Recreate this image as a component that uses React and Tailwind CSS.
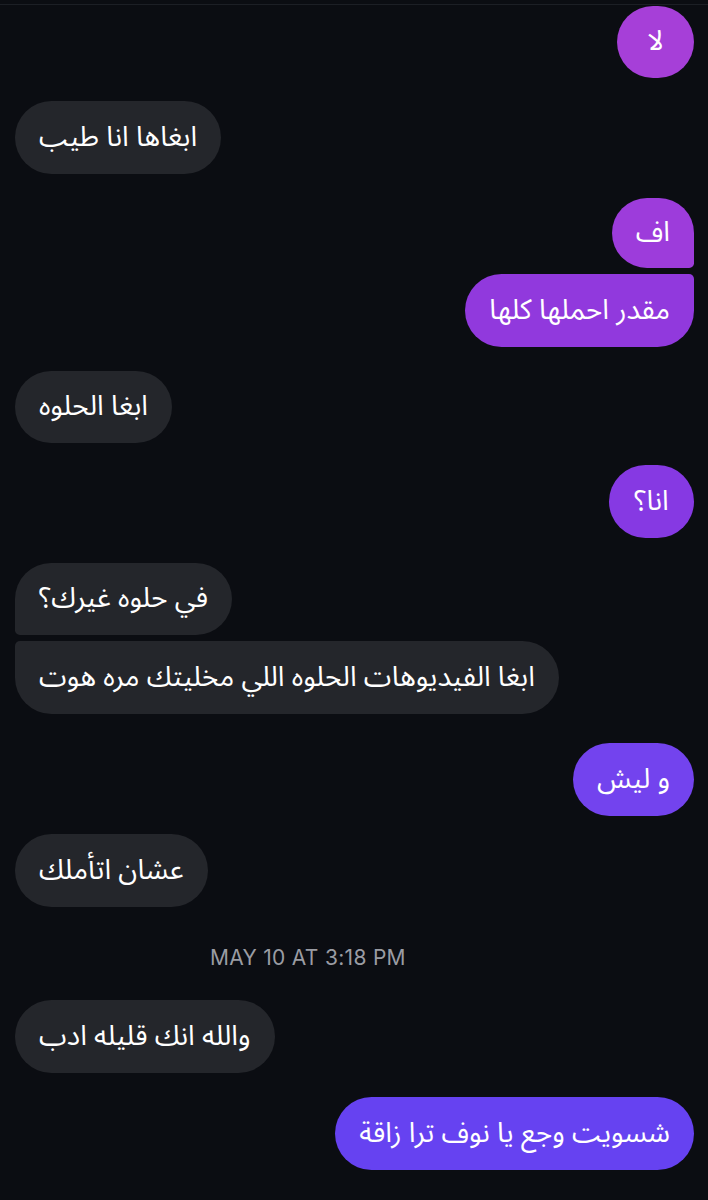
// Chat thread screenshot: Arabic messages, sent (purple gradient) on the right, received (gray) on the left
const font = { fontFamily: '"Noto Sans Arabic", "Noto Sans", "DejaVu Sans", sans-serif' };

function Bubble({ text, mine, color = "bg-[#24262b]", corner = "", h = "h-[73px]", pad = "px-[24px]", mt = "" }) {
  return (
    <div
      dir="rtl"
      style={font}
      className={`flex items-center justify-center rounded-[37px] text-[28px] leading-none text-white whitespace-nowrap ${
        mine ? "self-end" : "self-start"
      } ${color} ${corner} ${h} ${pad} ${mt}`}
    >
      {text}
    </div>
  );
}

export default function App() {
  return (
    <div className="w-[708px] h-[1200px] bg-[#0b0d12] overflow-hidden">
      <div className="h-[4px]" />
      <div className="h-px bg-[#1c1f25]" />
      <div className="flex flex-col pl-[15px] pr-[14px] pt-px">
        <Bubble mine text="لا" color="bg-[#a63fd8]" h="h-[72px]" pad="w-[77px]" />
        <Bubble text="ابغاها انا طيب" mt="mt-[23px]" />
        <Bubble mine text="اف" color="bg-[#9d3cdb]" corner="rounded-br-[5px]" h="h-[70px]" mt="mt-[24px]" />
        <Bubble mine text="مقدر احملها كلها" color="bg-[#9139dd]" corner="rounded-tr-[5px]" mt="mt-[6px]" />
        <Bubble text="ابغا الحلوه" h="h-[72px]" mt="mt-[24px]" />
        <Bubble mine text="انا؟" color="bg-[#8639e3]" pad="w-[85px]" mt="mt-[22px]" />
        <Bubble text="في حلوه غيرك؟" corner="rounded-bl-[5px]" h="h-[72px]" mt="mt-[25px]" />
        <Bubble text="ابغا الفيديوهات الحلوه اللي مخليتك مره هوت" corner="rounded-tl-[5px]" mt="mt-[6px]" />
        <Bubble mine text="و ليش" color="bg-[#7343ee]" mt="mt-[29px]" />
        <Bubble text="عشان اتأملك" mt="mt-[18px]" />
        <div
          className="mt-[39px] self-start ml-[195px] h-[24px] flex items-center text-[21px] text-[#9a9ca3] tracking-[0.3px]"
          style={{ fontFamily: '"Inter", "Liberation Sans", sans-serif' }}
        >
          MAY 10 AT 3:18 PM
        </div>
        <Bubble text="والله انك قليله ادب" mt="mt-[30px]" />
        <Bubble mine text="شسويت وجع يا نوف ترا زاقة" color="bg-[#6642f1]" mt="mt-[24px]" />
      </div>
    </div>
  );
}
